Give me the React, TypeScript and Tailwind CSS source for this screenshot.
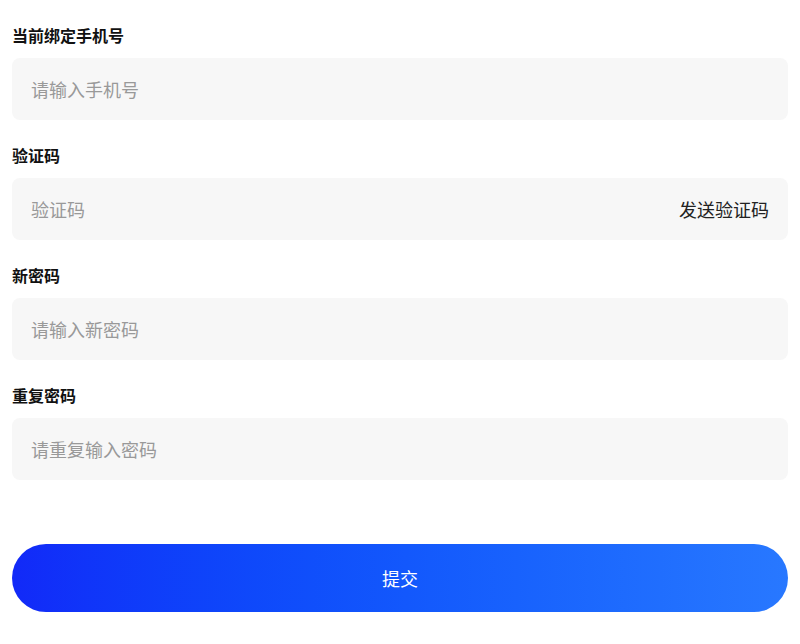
import { useState } from "react";

const fieldFont = { fontFamily: '"Noto Sans CJK SC", "Noto Sans", sans-serif' };

interface FieldProps {
  label: string;
  placeholder: string;
  type?: string;
  suffix?: React.ReactNode;
  first?: boolean;
}

const Field = ({ label, placeholder, type = "text", suffix, first }: FieldProps) => {
  const [value, setValue] = useState("");
  return (
    <div className={first ? "pt-[23px]" : "pt-[23px]"}>
      <div className="h-6 leading-6 text-[16px] font-bold text-[#111111] mb-[11px]">{label}</div>
      <div className="h-[62px] rounded-lg bg-[#f7f7f7] flex items-center px-[19px]">
        <input
          type={type}
          value={value}
          onChange={(e) => setValue(e.target.value)}
          placeholder={placeholder}
          className="flex-1 min-w-0 bg-transparent outline-none text-[18px] text-[#222222] placeholder:text-[#999999]"
          style={fieldFont}
        />
        {suffix}
      </div>
    </div>
  );
};

const App = () => {
  return (
    <div className="min-h-[644px] bg-white px-3" style={fieldFont}>
      <Field first label="当前绑定手机号" placeholder="请输入手机号" />
      <Field
        label="验证码"
        placeholder="验证码"
        suffix={<button className="text-[18px] text-[#222222] shrink-0">发送验证码</button>}
      />
      <Field label="新密码" placeholder="请输入新密码" type="password" />
      <Field label="重复密码" placeholder="请重复输入密码" type="password" />
      <button className="mt-[64px] w-full h-[68px] rounded-full bg-linear-to-r from-[#1229f8] to-[#2878ff] text-white text-[18px]">
        提交
      </button>
    </div>
  );
};

export default App;
